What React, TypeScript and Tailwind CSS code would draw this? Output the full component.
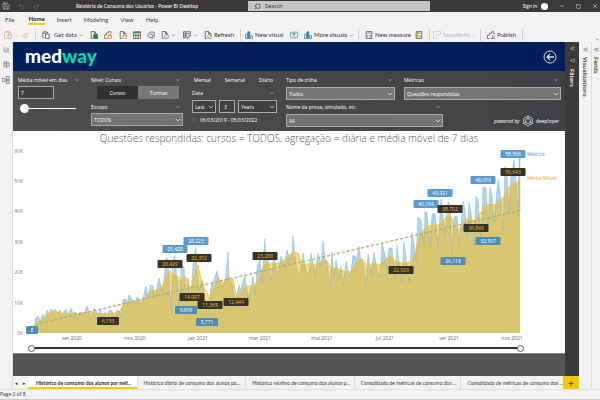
import type { ReactNode } from "react";
import {
  BarChart3,
  ChevronDown,
  ChevronsLeft,
  Filter,
  Minus,
  Paintbrush,
  Redo2,
  Save,
  Search,
  Square,
  Table,
  Undo2,
  X,
} from "lucide-react";

type Point = [number, number];

const average: Point[] = [
  [27, 327], [35, 326], [40, 321], [45, 316], [50, 313], [57, 312], [62, 313], [68, 314], [75, 313], [80, 314],
  [87, 312], [95, 313], [105, 314], [115, 313], [120, 311], [123, 305], [128, 302], [140, 301], [145, 298],
  [150, 291], [157, 290], [163, 285], [168, 273], [170, 271], [172, 275], [175, 274], [178, 277], [182, 280],
  [185, 276], [191, 289], [195, 272], [198, 265], [201, 278], [205, 290], [210, 298], [214, 288], [218, 278],
  [223, 283], [229, 277], [233, 280], [236, 295], [240, 293], [246, 286], [253, 286], [257, 283], [260, 275],
  [265, 262], [270, 264], [280, 263], [285, 260], [289, 255], [294, 252], [298, 253], [302, 264], [310, 264],
  [318, 264], [322, 261], [327, 261], [331, 268], [337, 268], [343, 271], [350, 272], [355, 265], [360, 259],
  [364, 260], [367, 267], [373, 263], [380, 265], [386, 259], [390, 255], [395, 261], [402, 263], [411, 262],
  [415, 253], [420, 235], [427, 226], [433, 225], [439, 225], [446, 217], [450, 215], [454, 224], [458, 230],
  [463, 224], [469, 217], [474, 221], [479, 216], [485, 206], [489, 204], [495, 205], [500, 200], [504, 197],
  [508, 188], [512, 185], [517, 183], [520, 178],
];

const metric: Point[] = [
  [35, 326], [35, 319], [38, 316], [40, 321], [43, 314], [45, 317], [47, 310], [49, 314], [51, 309], [53, 312],
  [55, 309], [58, 313], [60, 310], [62, 318], [64, 312], [66, 309], [68, 315], [71, 308], [73, 314], [75, 312],
  [77, 320], [79, 313], [82, 312], [84, 315], [87, 306], [89, 311], [91, 321], [94, 308], [96, 310], [99, 316],
  [100, 309], [103, 317], [105, 312], [107, 320], [109, 310], [112, 311], [114, 317], [117, 310], [119, 311],
  [121, 316], [123, 300], [126, 299], [127, 305], [129, 295], [132, 299], [134, 306], [137, 297], [139, 299],
  [141, 306], [144, 294], [146, 286], [148, 297], [151, 285], [153, 286], [155, 298], [159, 278], [162, 291],
  [164, 280], [166, 258], [168, 259], [169, 280], [171, 310], [173, 260], [175, 256], [177, 278], [179, 308],
  [181, 268], [184, 266], [186, 303], [188, 278], [191, 299], [193, 264], [196, 247], [197, 270], [199, 290],
  [202, 280], [205, 303], [208, 316], [211, 286], [214, 280], [217, 271], [220, 283], [223, 287], [226, 275],
  [228, 252], [229, 278], [232, 284], [235, 302], [239, 285], [241, 290], [243, 280], [245, 276], [248, 298],
  [251, 287], [253, 277], [255, 294], [257, 268], [260, 258], [262, 283], [264, 250], [265, 239], [266, 262],
  [268, 260], [271, 281], [274, 254], [276, 270], [278, 276], [281, 256], [284, 266], [287, 250], [290, 260],
  [292, 252], [293, 236], [295, 255], [297, 272], [300, 275], [303, 253], [306, 271], [309, 274], [311, 253],
  [314, 268], [315, 276], [318, 253], [321, 266], [322, 256], [323, 241], [325, 258], [327, 263], [330, 288],
  [332, 252], [334, 278], [336, 260], [339, 278], [341, 266], [343, 286], [346, 261], [349, 277], [351, 272],
  [353, 255], [357, 258], [359, 246], [361, 262], [363, 263], [366, 287], [368, 254], [371, 275], [374, 252],
  [377, 270], [380, 277], [382, 244], [385, 254], [387, 269], [389, 248], [392, 248], [395, 278], [397, 245],
  [399, 262], [402, 282], [404, 242], [407, 265], [409, 282], [412, 233], [414, 243], [416, 261], [418, 217],
  [421, 220], [424, 244], [425, 211], [427, 213], [430, 247], [432, 214], [435, 213], [438, 247], [441, 199],
  [443, 218], [445, 236], [448, 201], [450, 206], [452, 254], [454, 217], [457, 216], [459, 246], [462, 213],
  [463, 201], [465, 210], [467, 237], [469, 202], [471, 211], [474, 245], [476, 196], [478, 200], [481, 240],
  [483, 187], [486, 188], [488, 226], [490, 187], [492, 195], [494, 222], [496, 201], [498, 179], [500, 190],
  [503, 230], [505, 166], [507, 172], [509, 214], [511, 176], [514, 160], [516, 180], [518, 216], [519, 158],
  [520, 157], [520, 212],
];

const toPath = (points: Point[]) => points.map(([x, y], i) => `${i ? "L" : "M"}${x} ${y}`).join("");
const toArea = (points: Point[]) => `${toPath(points)}L520 333L${points[0][0]} 333Z`;

const flags: { x: number; y: number; text: string; kind: "blue" | "teal" | "dark" }[] = [
  { x: 32, y: 330, text: "8", kind: "teal" },
  { x: 175, y: 249, text: "25,428", kind: "blue" },
  { x: 196, y: 241, text: "28,223", kind: "blue" },
  { x: 170, y: 264, text: "20,429", kind: "dark" },
  { x: 199, y: 258, text: "22,352", kind: "dark" },
  { x: 108, y: 321, text: "6,153", kind: "dark" },
  { x: 186, y: 310, text: "9,899", kind: "teal" },
  { x: 192, y: 297, text: "14,097", kind: "dark" },
  { x: 210, y: 305, text: "11,368", kind: "dark" },
  { x: 207, y: 322, text: "5,771", kind: "teal" },
  { x: 236, y: 302, text: "12,444", kind: "dark" },
  { x: 265, y: 256, text: "23,289", kind: "dark" },
  { x: 401, y: 270, text: "22,929", kind: "dark" },
  { x: 426, y: 204, text: "40,194", kind: "blue" },
  { x: 440, y: 193, text: "43,921", kind: "blue" },
  { x: 450, y: 209, text: "38,702", kind: "dark" },
  { x: 453, y: 261, text: "26,118", kind: "teal" },
  { x: 476, y: 228, text: "36,849", kind: "dark" },
  { x: 488, y: 241, text: "32,507", kind: "teal" },
  { x: 483, y: 180, text: "48,059", kind: "blue" },
  { x: 513, y: 154, text: "58,596", kind: "blue" },
  { x: 513, y: 172, text: "50,643", kind: "dark" },
];

const flagFill = { blue: "#5b9bd0", teal: "#4f8db3", dark: "#363328" };

const months = [
  [72, "set 2020"],
  [135, "nov 2020"],
  [198, "jan 2021"],
  [260, "mar 2021"],
  [322, "mai 2021"],
  [385, "jul 2021"],
  [449, "set 2021"],
  [512, "nov 2021"],
] as const;

function Chart() {
  return (
    <svg viewBox="13 145 552 200" className="block w-full" role="img" aria-label="Questões respondidas">
      <g fontSize="5" fill="#7d7d7d" textAnchor="end">
        {[0, 1, 2, 3, 4, 5, 6].map((n) => (
          <text key={n} x="23" y={335 - n * 30.4}>{n ? `${n}0K` : "0K"}</text>
        ))}
      </g>
      <path d={toArea(metric)} fill="#b1d4ef" />
      <path d={toArea(average)} fill="#f9b800" fillOpacity="0.52" />
      <path d={toPath(metric)} fill="none" stroke="#6aaee0" strokeWidth="0.6" strokeOpacity="0.7" />
      <path d={toPath(average)} fill="none" stroke="#f3c443" strokeWidth="1" />
      <path d="M35 325L520 211" stroke="#f3c443" strokeWidth="1.400" strokeDasharray="3 2" strokeOpacity="0.7" />
      <path d="M35 324.500L520 210.500" stroke="#8fa9a8" strokeWidth="1.200" strokeDasharray="3 2" strokeOpacity="0.8" />
      <g fontSize="5" textAnchor="middle">
        {flags.map(({ x, y, text, kind }) => {
          const width = text.length > 5 ? 25 : text.length > 1 ? 22 : 12;
          return (
            <g key={text}>
              <rect x={x - width / 2} y={y - 4} width={width} height="8" rx="1" fill={flagFill[kind]} />
              <text x={x} y={y + 2} fill={kind === "dark" ? "#f5b92b" : "#ffffff"}>{text}</text>
            </g>
          );
        })}
        {months.map(([x, text]) => (
          <text key={text} x={x} y="340" fill="#666666">{text}</text>
        ))}
      </g>
      <text x="527" y="156" fontSize="5" fill="#4f98d0">Métrica</text>
      <text x="527" y="180" fontSize="5" fill="#eda51a">Média Móvel</text>
    </svg>
  );
}

function Heading({ children, htmlFor }: { children: ReactNode; htmlFor?: string }) {
  return (
    <div className="flex h-2 items-center justify-between pr-0.5 leading-[8px] whitespace-nowrap">
      <label htmlFor={htmlFor}>{children}</label>
      <ChevronDown size={6} color="#d0d0d0" className="shrink-0" />
    </div>
  );
}

function Dropdown({ id, value, label, className = "" }: { id: string; value: string; label?: string; className?: string }) {
  return (
    <div className={`grid h-[13px] border border-[#a9a9a9] ${className}`}>
      <select
        id={id}
        aria-label={label}
        className="col-start-1 row-start-1 w-full appearance-none bg-transparent pl-0.5 leading-[8px] text-white outline-none"
      >
        <option>{value}</option>
      </select>
      <ChevronDown size={8} className="pointer-events-none col-start-1 row-start-1 self-center justify-self-end" />
    </div>
  );
}

function Glyph({ children }: { children: ReactNode }) {
  return (
    <svg viewBox="0 0 10 10" className="size-2 shrink-0" fill="none" stroke="#555555">
      {children}
    </svg>
  );
}

function Sheet({ children }: { children?: ReactNode }) {
  return (
    <Glyph>
      <path d="M4 9.500H1.500V0.500H5.500L8 3V4M5.500 0.500V3H8" />
      {children}
    </Glyph>
  );
}

function Cylinder({ color }: { color: string }) {
  return (
    <path d="M5 5.500V9C5 9.800 9.500 9.800 9.500 9V5.500M5 5.500C5 4.700 9.500 4.700 9.500 5.500C9.500 6.300 5 6.300 5 5.500Z" stroke={color} />
  );
}

function Bars() {
  return (
    <Glyph>
      <path d="M0.500 4H3V9.500H0.500Z" stroke="#4b7e9c" />
      <path d="M3.500 1H6V9.500H3.500Z" fill="#2f86bd" stroke="#2f86bd" />
      <path d="M7 6H9.500V9.500H7Z" stroke="#4b7e9c" />
    </Glyph>
  );
}

function Sum({ children }: { children?: ReactNode }) {
  return (
    <Glyph>
      <path d="M1.500 0.500H8.500V9.500H1.500Z" />
      <path d="M3 2.500H7M3.500 5V8M6.500 5V8" stroke="#36789e" />
      {children}
    </Glyph>
  );
}

function Tool({ children, label }: { children: ReactNode; label?: string }) {
  return (
    <button type="button" aria-label={label} className="flex items-center gap-0.5 whitespace-nowrap">
      {children}
    </button>
  );
}

function Chevron() {
  return <ChevronDown size={5} className="shrink-0" />;
}

function Ribbon() {
  return (
    <div className="flex h-3.5 items-center font-['Lato',sans-serif] text-[6px] text-[#333333]">
      <div className="flex h-3 w-9 items-center justify-between border-r border-[#d2d0ce] pr-1.5 pl-1 text-[#b5b0a8]">
        <Tool label="Paste">
          <Glyph>
            <path d="M4 9.500H0.500V1.500H7.500V3M2.500 1.500V0.500H5.500V1.500" stroke="#d9b48a" />
            <path d="M5 4H9V9.500H5Z" stroke="#b5b0a8" />
          </Glyph>
          <Chevron />
        </Tool>
        <Tool label="Format painter"><Paintbrush size={7} color="#d6b68f" /></Tool>
      </div>
      <div className="flex h-3 w-[205px] items-center justify-between border-r border-[#d2d0ce] px-1.5">
        <Tool>
          <Glyph>
            <path d="M1 2V7.500C1 8 2 8.500 3 8.500M1 2C1 0.500 7 0.500 7 2C7 3 1 3 1 2M7 2V3" />
            <path d="M4.500 4H9V9.500H4.500Z" />
          </Glyph>
          <span className="pl-0.5">Get data</span>
          <Chevron />
        </Tool>
        <Tool label="Excel"><Sheet><path d="M4.500 4.500H9.500V9.500H4.500Z" fill="#1c8049" stroke="#1c8049" /></Sheet></Tool>
        <Tool label="Power BI datasets">
          <Glyph>
            <path d="M4 9.500H0.500V5H3V2.500H5.500V0.500H8.500V4" stroke="#666666" />
            <Cylinder color="#dc852c" />
          </Glyph>
        </Tool>
        <Tool label="SQL Server"><Sheet><Cylinder color="#dc852c" /></Sheet></Tool>
        <Tool label="Enter data">
          <Glyph>
            <path d="M0.500 1.500H9.500V9.500H0.500ZM0.500 5.500H9.500M3.500 2V9.500M6.500 2V9.500" />
            <path d="M0.500 1.500H9.500" stroke="#26915a" strokeWidth="2" />
          </Glyph>
        </Tool>
        <Tool label="Dataverse">
          <Glyph><path d="M9 2C6 0 1 2 1 5.500C1 9 6 9 7 6.500C8 4 4 3 3.500 5.500M9 2V7.500C8 9 6 9 5 8.500" /></Glyph>
        </Tool>
        <Tool label="Recent sources">
          <Sheet><circle cx="7" cy="7" r="2.500" stroke="#3685ba" /></Sheet>
          <Chevron />
        </Tool>
        <Tool label="Transform data">
          <Glyph>
            <path d="M4 8.500H0.500V1H9.500V4M0.500 3.500H9.500M0.500 6H5M3.500 1V8.500" />
            <path d="M5 9.500L9.500 5" stroke="#3685ba" strokeWidth="1.500" />
          </Glyph>
          <Chevron />
        </Tool>
        <Tool>
          <Sheet><path d="M9.500 6.500A2.500 2.500 0 1 0 9 8.500M9.500 4.500V6.500H7.500" stroke="#2e9b68" /></Sheet>
          Refresh
        </Tool>
      </div>
      <div className="flex h-3 w-[118px] items-center justify-between border-r border-[#d2d0ce] pr-1 pl-1">
        <Tool><Bars />New visual</Tool>
        <Tool label="Text box">
          <Glyph>
            <path d="M0.500 1.500H9.500V8.500H0.500Z" stroke="#3b9bd3" />
            <path d="M3 3.500H7M5 3.500V7" />
          </Glyph>
        </Tool>
        <Tool><Bars />More visuals<Chevron /></Tool>
      </div>
      <div className="flex h-3 w-[71px] items-center justify-between border-r border-[#d2d0ce] px-1.5">
        <Tool><Sum />New measure</Tool>
        <Tool label="Quick measure"><Sum><path d="M4 0L1 5H3.500L2 9" stroke="#e78b1e" strokeWidth="1.500" /></Sum></Tool>
      </div>
      <div className="flex h-3 w-[51px] items-center justify-center border-r border-[#d2d0ce] text-[#b5b3b1]">
        <Tool>
          <Glyph>
            <path d="M5 9.500H0.500V0.500H9.500V5" stroke="#a9cfe3" />
            <path d="M3 7L6.500 3M4.500 8L9 4" stroke="#a9cfe3" />
          </Glyph>
          Sensitivity
          <Chevron />
        </Tool>
      </div>
      <div className="flex h-3 w-[42px] items-center justify-center border-r border-[#d2d0ce]">
        <Tool>
          <Glyph>
            <path d="M3.500 9.500H0.500V5H3V3H5.500V1H8.500V4" />
            <path d="M4.500 9.500H9V6M7 9V5.500" stroke="#447a9b" />
          </Glyph>
          Publish
        </Tool>
      </div>
      <ChevronDown size={5} className="ml-auto self-end" />
    </div>
  );
}

function Filters() {
  return (
    <section className="grid grid-cols-[64fr_92fr_85fr_275fr] gap-[9px] bg-linear-to-r from-[#4d4f50] via-[#484848] to-[#3f4244] pt-[5px] pr-1 pb-1 pl-[5px] text-[5px] text-white">
      <div className="flex min-w-0 flex-col gap-0.5">
        <Heading htmlFor="window">Média móvel em dias</Heading>
        <input id="window" defaultValue="7" className="h-[13px] w-9 border border-[#a5a5a5] bg-[#414141] pl-0.5 text-white" />
        <input
          type="range"
          aria-label="Média móvel"
          defaultValue="0"
          className="mt-0.5 ml-0.5 h-2.5 w-14 appearance-none bg-transparent [&::-webkit-slider-runnable-track]:h-px [&::-webkit-slider-runnable-track]:bg-white [&::-webkit-slider-thumb]:-mt-1 [&::-webkit-slider-thumb]:size-[9px] [&::-webkit-slider-thumb]:appearance-none [&::-webkit-slider-thumb]:rounded-full [&::-webkit-slider-thumb]:bg-white"
        />
      </div>
      <div className="flex min-w-0 flex-col gap-0.5">
        <Heading>Nível: Cursos</Heading>
        <div className="mr-1 ml-1.5 grid h-[13px] grid-cols-2">
          <button type="button" className="bg-[#303030]">Cursos</button>
          <button type="button" className="bg-[#777777]">Turmas</button>
        </div>
        <div className="pt-0.5"><Heading htmlFor="scope">Escopo</Heading></div>
        <Dropdown id="scope" value="TODOS" className="bg-[#747474]" />
      </div>
      <div className="flex min-w-0 flex-col gap-[3px]">
        <div className="flex h-2 items-center justify-between pr-1 pl-0.5">
          <button type="button">Mensal</button>
          <button type="button">Semanal</button>
          <button type="button">Diário</button>
        </div>
        <div className="pt-0.5"><Heading htmlFor="period">Data</Heading></div>
        <div className="grid grid-cols-[24fr_16fr_39fr] gap-[3px]">
          <Dropdown id="period" value="Last" className="bg-[#404040]" />
          <input aria-label="Quantidade" defaultValue="3" className="h-[13px] min-w-0 border border-[#a9a9a9] bg-[#404040] pl-1 text-white" />
          <Dropdown id="unit" label="Unidade" value="Years" className="bg-[#404040]" />
        </div>
        <p className="flex items-center gap-1 leading-[8px]"><Square size={4} color="#777777" />06/03/2019 - 05/03/2022</p>
      </div>
      <div className="flex min-w-0 flex-col gap-[3px]">
        <div className="grid grid-cols-[109fr_157fr] gap-[9px]">
          <div className="flex flex-col gap-[3px]">
            <Heading htmlFor="track">Tipo de trilha</Heading>
            <Dropdown id="track" value="Todos" className="bg-[#747474]" />
          </div>
          <div className="flex flex-col gap-[3px]">
            <Heading htmlFor="metric">Métricas</Heading>
            <Dropdown id="metric" value="Questões respondidas" className="bg-[#747474]" />
          </div>
        </div>
        <div className="flex items-end justify-between">
          <div className="flex w-[57%] flex-col gap-[3px]">
            <Heading htmlFor="exam">Nome da prova, simulado, etc</Heading>
            <Dropdown id="exam" value="All" className="bg-[#747474]" />
          </div>
          <p className="flex items-center gap-0.5 pr-0.5">
            <i>powered by</i>
            <svg viewBox="0 0 12 12" className="size-3" fill="none" stroke="#dddddd" strokeWidth="0.8">
              <path d="M6 1L10.300 3.500V8.500L6 11L1.700 8.500V3.500Z" />
              <circle cx="6" cy="6" r="2.500" />
              <path d="M6 1V3.500M10.300 8.500L8 7.300M1.700 8.500L4 7.300" />
            </svg>
            deeployer
          </p>
        </div>
      </div>
    </section>
  );
}

const thumbs =
  "pointer-events-none absolute inset-0 w-full appearance-none bg-transparent [&::-webkit-slider-thumb]:pointer-events-auto [&::-webkit-slider-thumb]:size-[7px] [&::-webkit-slider-thumb]:appearance-none [&::-webkit-slider-thumb]:rounded-full [&::-webkit-slider-thumb]:border [&::-webkit-slider-thumb]:border-[#555555] [&::-webkit-slider-thumb]:bg-white";

const pages = [
  "Histórico diário de consumo dos alunos po...",
  "Histórico relativo de consumo dos alunos p...",
  "Consolidado de métricas de consumo dos ...",
  "Consolidado de métricas de consumo dos ...",
];

export default function App() {
  return (
    <div className="flex min-h-screen flex-col bg-[#f3f2f1] font-['Open_Sans','Noto_Sans',sans-serif] text-[6px] leading-[8px] text-[#333333]">
      <header className="grid h-3 grid-cols-[248fr_216fr_136fr] items-center bg-[#3b3a39] font-['Lato',sans-serif] text-[5px] text-white">
        <div className="flex items-center gap-4 pl-0.5">
          <Save size={8} color="#bbbbbb" />
          <Undo2 size={7} color="#777777" className="-ml-2" />
          <Redo2 size={7} color="#777777" className="-ml-2" />
          <p className="pl-5">Relatório de Consumo dos Usuários - Power BI Desktop</p>
        </div>
        <label className="mr-[34px] flex h-2.5 items-center gap-1 bg-[#c8c6c4] pl-1.5 text-[6px] text-[#333333]">
          <Search size={7} className="-scale-x-100" />
          <input aria-label="Search" placeholder="Search" className="min-w-0 flex-1 placeholder:text-[#444444]" />
        </label>
        <div className="flex items-center justify-end gap-[11px] pr-0.5">
          <span className="flex items-center gap-1">Sign in <span className="size-[7px] rounded-full bg-white" /></span>
          <Minus size={6} />
          <Square size={5} />
          <X size={6} />
        </div>
      </header>
      <nav className="flex h-4 items-center gap-3 pl-[5px] font-['Lato',sans-serif] text-[#444444]">
        <a href="#file" className="pr-0.5">File</a>
        <a href="#home" className="border-b-2 border-[#f2c811] font-bold text-[#222222]">Home</a>
        <a href="#insert">Insert</a>
        <a href="#modeling">Modeling</a>
        <a href="#view">View</a>
        <a href="#help">Help</a>
      </nav>
      <Ribbon />
      <div className="flex flex-1 border-b border-[#e1dfdd]">
        <aside className="flex w-[13px] shrink-0 flex-col items-center gap-2 border-r border-[#dddddd] pt-1 text-[#777777]">
          <BarChart3 size={7} />
          <Table size={7} />
          <Glyph>
            <path d="M5.500 0.500H9.500V4H5.500ZM5.500 6H9.500V9.500H5.500ZM0.500 3H4V7H0.500ZM4 5H7.500V4M7.500 5V6" stroke="#777777" />
          </Glyph>
        </aside>
        <div className="flex min-w-0 flex-1 flex-col">
          <div className="flex flex-1">
            <main className="flex min-w-0 flex-1 flex-col bg-[#555555]">
              <div className="flex h-[29px] items-center justify-between bg-[#00205b] pr-2 pl-3 text-white">
                <p className="pb-0.5 font-['Lato',sans-serif] text-[19px] leading-6 font-black">
                  med<span className="text-[#00dcaf]">way</span>
                </p>
                <button type="button" aria-label="Voltar">
                  <svg viewBox="0 0 14 14" className="size-3.5" fill="none" stroke="#d4dae6">
                    <circle cx="7" cy="7" r="6" />
                    <path d="M11 7H4M7 4L4 7L7 10" strokeWidth="1.300" />
                  </svg>
                </button>
              </div>
              <Filters />
              <section className="border-b border-[#888888] bg-white">
                <h1 className="h-3.5 text-center text-[10px] leading-[15px] font-light text-[#555555]">
                  Questões respondidas: cursos = TODOS, agregação = diária e média móvel de 7 dias
                </h1>
                <Chart />
                <div className="relative mr-[41px] mb-px ml-[15px] h-[7px]">
                  <div className="mx-1 h-1 border-b-2 border-[#333333]" />
                  <input type="range" aria-label="Início" defaultValue="0" className={thumbs} />
                  <input type="range" aria-label="Fim" defaultValue="100" className={thumbs} />
                </div>
              </section>
            </main>
            <aside className="flex w-3.5 flex-col items-center gap-1.5 bg-[#3b3a39] pt-[3px] text-white">
              <ChevronsLeft size={7} />
              <Filter size={5} className="rotate-90" />
              <h2 className="font-semibold [writing-mode:vertical-rl]">Filters</h2>
            </aside>
          </div>
          <div className="flex h-[13px] items-center font-['Lato',sans-serif] text-[5px]">
            <button type="button" className="w-[7px] shrink-0">◂</button>
            <button type="button" className="w-2 shrink-0">▸</button>
            <nav className="grid h-full min-w-0 flex-1 grid-cols-[109fr_109fr_109fr_107fr_101fr] items-center text-[#444444]">
              <a href="#p1" className="flex h-full items-center border-b-2 border-[#f2c811] bg-white pt-0.5 pl-2 font-bold whitespace-nowrap text-[#222222]">
                Histórico de consumo dos alunos por mét...
              </a>
              {pages.map((page, i) => (
                <a key={i} href={`#p${i + 2}`} className="flex h-full items-center border-l border-[#dddddd] pl-1.5 whitespace-nowrap">
                  {page}
                </a>
              ))}
            </nav>
            <button type="button" aria-label="Nova página" className="h-full w-4 shrink-0 bg-[#f2c811] text-[10px] font-bold text-[#665500]">+</button>
          </div>
        </div>
        <aside className="flex w-[13px] flex-col items-center gap-1 border-r border-[#dddddd] pt-1">
          <ChevronsLeft size={7} />
          <h2 className="font-semibold [writing-mode:vertical-rl]">Visualizations</h2>
        </aside>
        <aside className="flex w-2 flex-col items-center gap-1 pt-1">
          <ChevronsLeft size={7} />
          <h2 className="font-semibold [writing-mode:vertical-rl]">Fields</h2>
        </aside>
      </div>
      <footer className="h-2.5 border-b border-[#cccccc] text-[5px] leading-[9px]">Page 2 of 8</footer>
    </div>
  );
}
